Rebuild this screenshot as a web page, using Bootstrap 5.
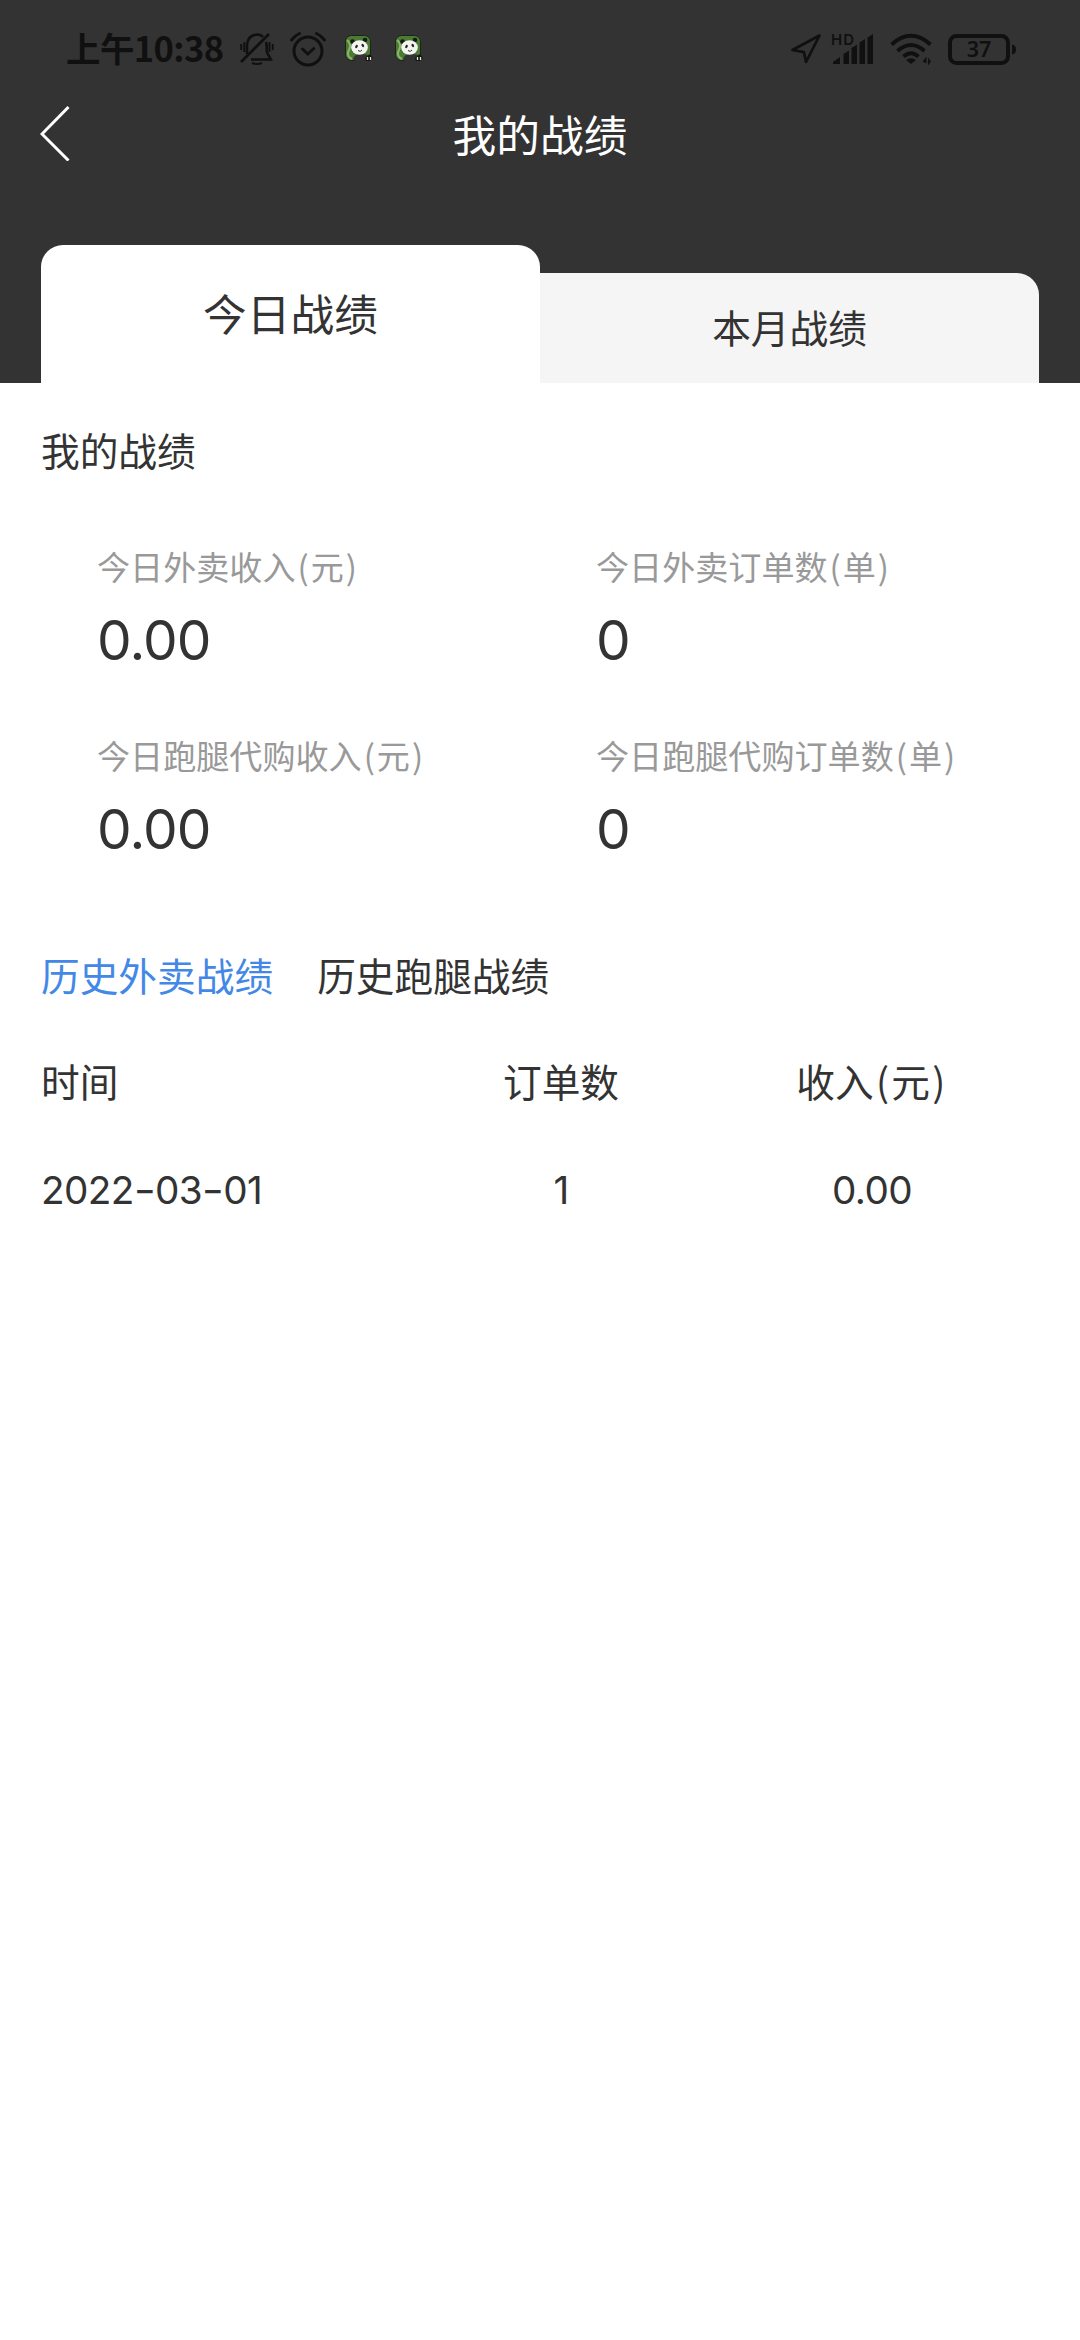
<!DOCTYPE html>
<html lang="zh-CN">
<head>
<meta charset="utf-8">
<meta name="viewport" content="width=device-width, initial-scale=1">
<title>我的战绩</title>
<link href="https://cdn.jsdelivr.net/npm/bootstrap@5.3.0/dist/css/bootstrap.min.css" rel="stylesheet">
<style>
  body { font-family: "Noto Sans CJK SC", sans-serif; font-size: 38.7px; line-height: 1; color: #333; background: #fff; min-height: 2340px; }
  .hero { background: #333; height: 383px; }
  .status { height: 98px; padding: 0 64px 0 66px; color: #101010; }
  .status svg { display: block; flex: none; overflow: visible; }
  .clock { font-size: 34.5px; font-weight: 700; line-height: 98px; width: 174px; padding-bottom: 4px; letter-spacing: -.6px; }
  .titlebar { height: 70px; padding: 0 40px; }
  .titlebar h1 { font-size: 43.7px; line-height: 70px; color: #fff; }
  .back-btn, .side-space { width: 30px; height: 56px; }
  .tabs { padding: 0 41px; height: 138px; margin-top: 77px; }
  .tab-on { height: 138px; background: #fff; border-radius: 22px 22px 0 0; font-size: 43.7px; padding-bottom: 3px; }
  .tab-off { height: 110px; background: #f5f5f5; border-radius: 0 22px 0 0; padding-bottom: 3px; }
  .sheet { padding: 0 41px; }
  .heading { font-size: 38.7px; line-height: 60px; margin: 36px 0 0; font-weight: 400; }
  .stats { padding-top: 64px; }
  .stats .cell { height: 189px; padding-left: 56px; }
  .stat-label { font-size: 33.1px; line-height: 46px; color: #999; white-space: nowrap; }
  .paren { padding: 0 .06em; }
  .digits { font-family: Inter, sans-serif; letter-spacing: -.6px; }
  .stat-num { font-size: 55px; line-height: 60px; margin-top: 21px; letter-spacing: -.9px; }
  .line { height: 106.5px; }
  .line.digits { padding-top: 6px; }
  .history-tabs { gap: 44px; }
  .picked { color: #4388e6; }
  .c-date { width: 364.5px; }
  .c-num { width: 311px; text-align: center; }
  .hy { display: inline-block; transform: scaleX(1.25) ; margin: 0 2px; }
</style>
<script src="https://cdn.jsdelivr.net/npm/bootstrap@5.3.0/dist/js/bootstrap.bundle.min.js"></script>
</head>
<body>
<svg width="0" height="0" class="position-absolute">
  <symbol id="panda" viewBox="0 0 28 28">
    <rect x=".5" y=".5" width="25" height="25" rx="6" fill="#4c7a35" stroke="#1c2417"/>
    <path d="M2 5Q7 9 4 15T7 24" fill="none" stroke="#8bb46c" stroke-width="2"/>
    <path d="M8 24Q10 18 18 19l6 1v4q-2 2-5 2h-9z" fill="#333"/>
    <circle cx="7.500" cy="6.500" r="2.300" fill="#161b13"/><circle cx="20" cy="5" r="2.300" fill="#161b13"/>
    <ellipse cx="14.500" cy="12.500" rx="8.300" ry="7.300" fill="#f3f5f1"/>
    <ellipse cx="11.500" cy="11.500" rx="1.200" ry="1.700" fill="#222" transform="rotate(30 11.500 11.500)"/>
    <ellipse cx="17.800" cy="10.500" rx="1.200" ry="1.700" fill="#222" transform="rotate(-30 17.800 10.500)"/>
    <path d="M13 15.500q2.500 2 4-.5" fill="none" stroke="#333"/>
    <path d="M20 23l5-4 3 4-3 3h-4z" fill="#141414"/><path d="M22.500 22v3M25.500 22v3" stroke="#e8e8d8" stroke-width="1.300"/>
  </symbol>
</svg>
<header class="hero">
  <div class="status d-flex align-items-center">
    <div class="clock text-nowrap">上午10:38</div>
    <svg width="34" height="32" viewBox="0 0 34 32" fill="none" stroke="currentColor" stroke-width="2.600">
      <path d="M7 21V12Q8 2 17 1.500q4 0 6 2.500M26 9q1 3 .8 10l4 7.500H11"/>
      <path d="M29 1L1 29" stroke-width="2.800"/><path d="M12 30q5 2 10 0M1.200 11v6M4.300 9v10M29.500 9v10M32.700 11v6" stroke-width="1.900"/>
    </svg>
    <svg class="ms-3" width="36" height="35" viewBox="0 0 36 35" fill="none" stroke="currentColor" stroke-width="3" stroke-linecap="round">
      <circle cx="18" cy="19" r="14"/><path d="M12.500 17l5.300 5 6-5.500M1.500 8Q5 3.500 9.500 1.500M26.500 1.500Q31 3.500 34.500 8"/>
    </svg>
    <svg width="28" height="28" style="margin-left:19px"><use href="#panda"/></svg>
    <svg width="28" height="28" style="margin-left:22px"><use href="#panda"/></svg>
    <svg class="ms-auto" width="30" height="30" viewBox="0 0 30 30" fill="none" stroke="currentColor" stroke-width="2.700" stroke-linejoin="round"><path d="M28.500 1.500L1.500 16l11.500 2.200L15 28z"/></svg>
    <svg width="42" height="32" viewBox="0 0 42 32" style="margin-left:11px" fill="currentColor">
      <text x="-1" y="11.500" font-family="Inter, sans-serif" font-size="15" font-weight="600" textLength="23">HD</text>
      <path d="M1 31v-2l7-5v7zM11.500 21l5.500-3.500V31h-5.500zM19.500 15l5.500-3.500V31h-5.500zM27.500 9.500L33 6v25h-5.500zM35.500 4.500L41 1v30h-5.500z"/>
    </svg>
    <svg width="42" height="32" viewBox="0 0 42 32" style="margin-left:16px" fill="none" stroke="currentColor" stroke-width="4">
      <path d="M1.500 11.500Q21-6 40.500 11.500M7.500 18Q21 6 34.500 18M13.500 23.500Q21 17 28.500 23.500"/>
      <path d="M16 27Q21 23.500 26 27l-5 4z" fill="currentColor" stroke="none"/><path d="M32.500 28.500l4-5v7zM38 24.500v8l3-4z" fill="currentColor" stroke="none"/>
    </svg>
    <svg width="68" height="31" viewBox="0 0 68 31" style="margin-left:16px" fill="none" stroke="currentColor" stroke-width="4">
      <rect x="2" y="2" width="58" height="27" rx="6.500"/><path d="M64 10.500q4 .5 4 5t-4 5z" fill="currentColor" stroke="none"/>
      <text x="31" y="22.800" text-anchor="middle" fill="currentColor" stroke="none" font-family="Noto Sans, sans-serif" font-size="21.500" font-weight="600">37</text>
    </svg>
  </div>
  <div class="titlebar d-flex justify-content-between align-items-center">
    <svg class="back-btn" viewBox="0 0 30 56" fill="none" stroke="#fff" stroke-width="3"><path d="M28.500 2L2 29l26.500 26.500"/></svg>
    <h1 class="m-0 fw-normal">我的战绩</h1>
    <span class="side-space"></span>
  </div>
  <div class="tabs d-flex align-items-end">
    <div class="tab-on w-50 d-flex align-items-center justify-content-center">今日战绩</div>
    <div class="tab-off w-50 d-flex align-items-center justify-content-center">本月战绩</div>
  </div>
</header>
<main class="sheet">
  <h2 class="heading">我的战绩</h2>
  <section class="stats">
    <div class="row g-0">
      <div class="col-6 cell"><div class="stat-label">今日外卖收入<span class="paren">(</span>元<span class="paren">)</span></div><div class="stat-num digits">0.00</div></div>
      <div class="col-6 cell"><div class="stat-label">今日外卖订单数<span class="paren">(</span>单<span class="paren">)</span></div><div class="stat-num digits">0</div></div>
      <div class="col-6 cell"><div class="stat-label">今日跑腿代购收入<span class="paren">(</span>元<span class="paren">)</span></div><div class="stat-num digits">0.00</div></div>
      <div class="col-6 cell"><div class="stat-label">今日跑腿代购订单数<span class="paren">(</span>单<span class="paren">)</span></div><div class="stat-num digits">0</div></div>
    </div>
  </section>
  <section class="history">
    <div class="line d-flex align-items-center history-tabs"><span class="picked">历史外卖战绩</span><span>历史跑腿战绩</span></div>
    <div class="line d-flex align-items-center"><div class="c-date">时间</div><div class="c-num">订单数</div><div class="c-num">收入<span class="paren">(</span>元<span class="paren">)</span></div></div>
    <div class="line d-flex align-items-center digits"><div class="c-date">2022<span class="hy">-</span>03<span class="hy">-</span>01</div><div class="c-num">1</div><div class="c-num">0.00</div></div>
  </section>
</main>
</body>
</html>
